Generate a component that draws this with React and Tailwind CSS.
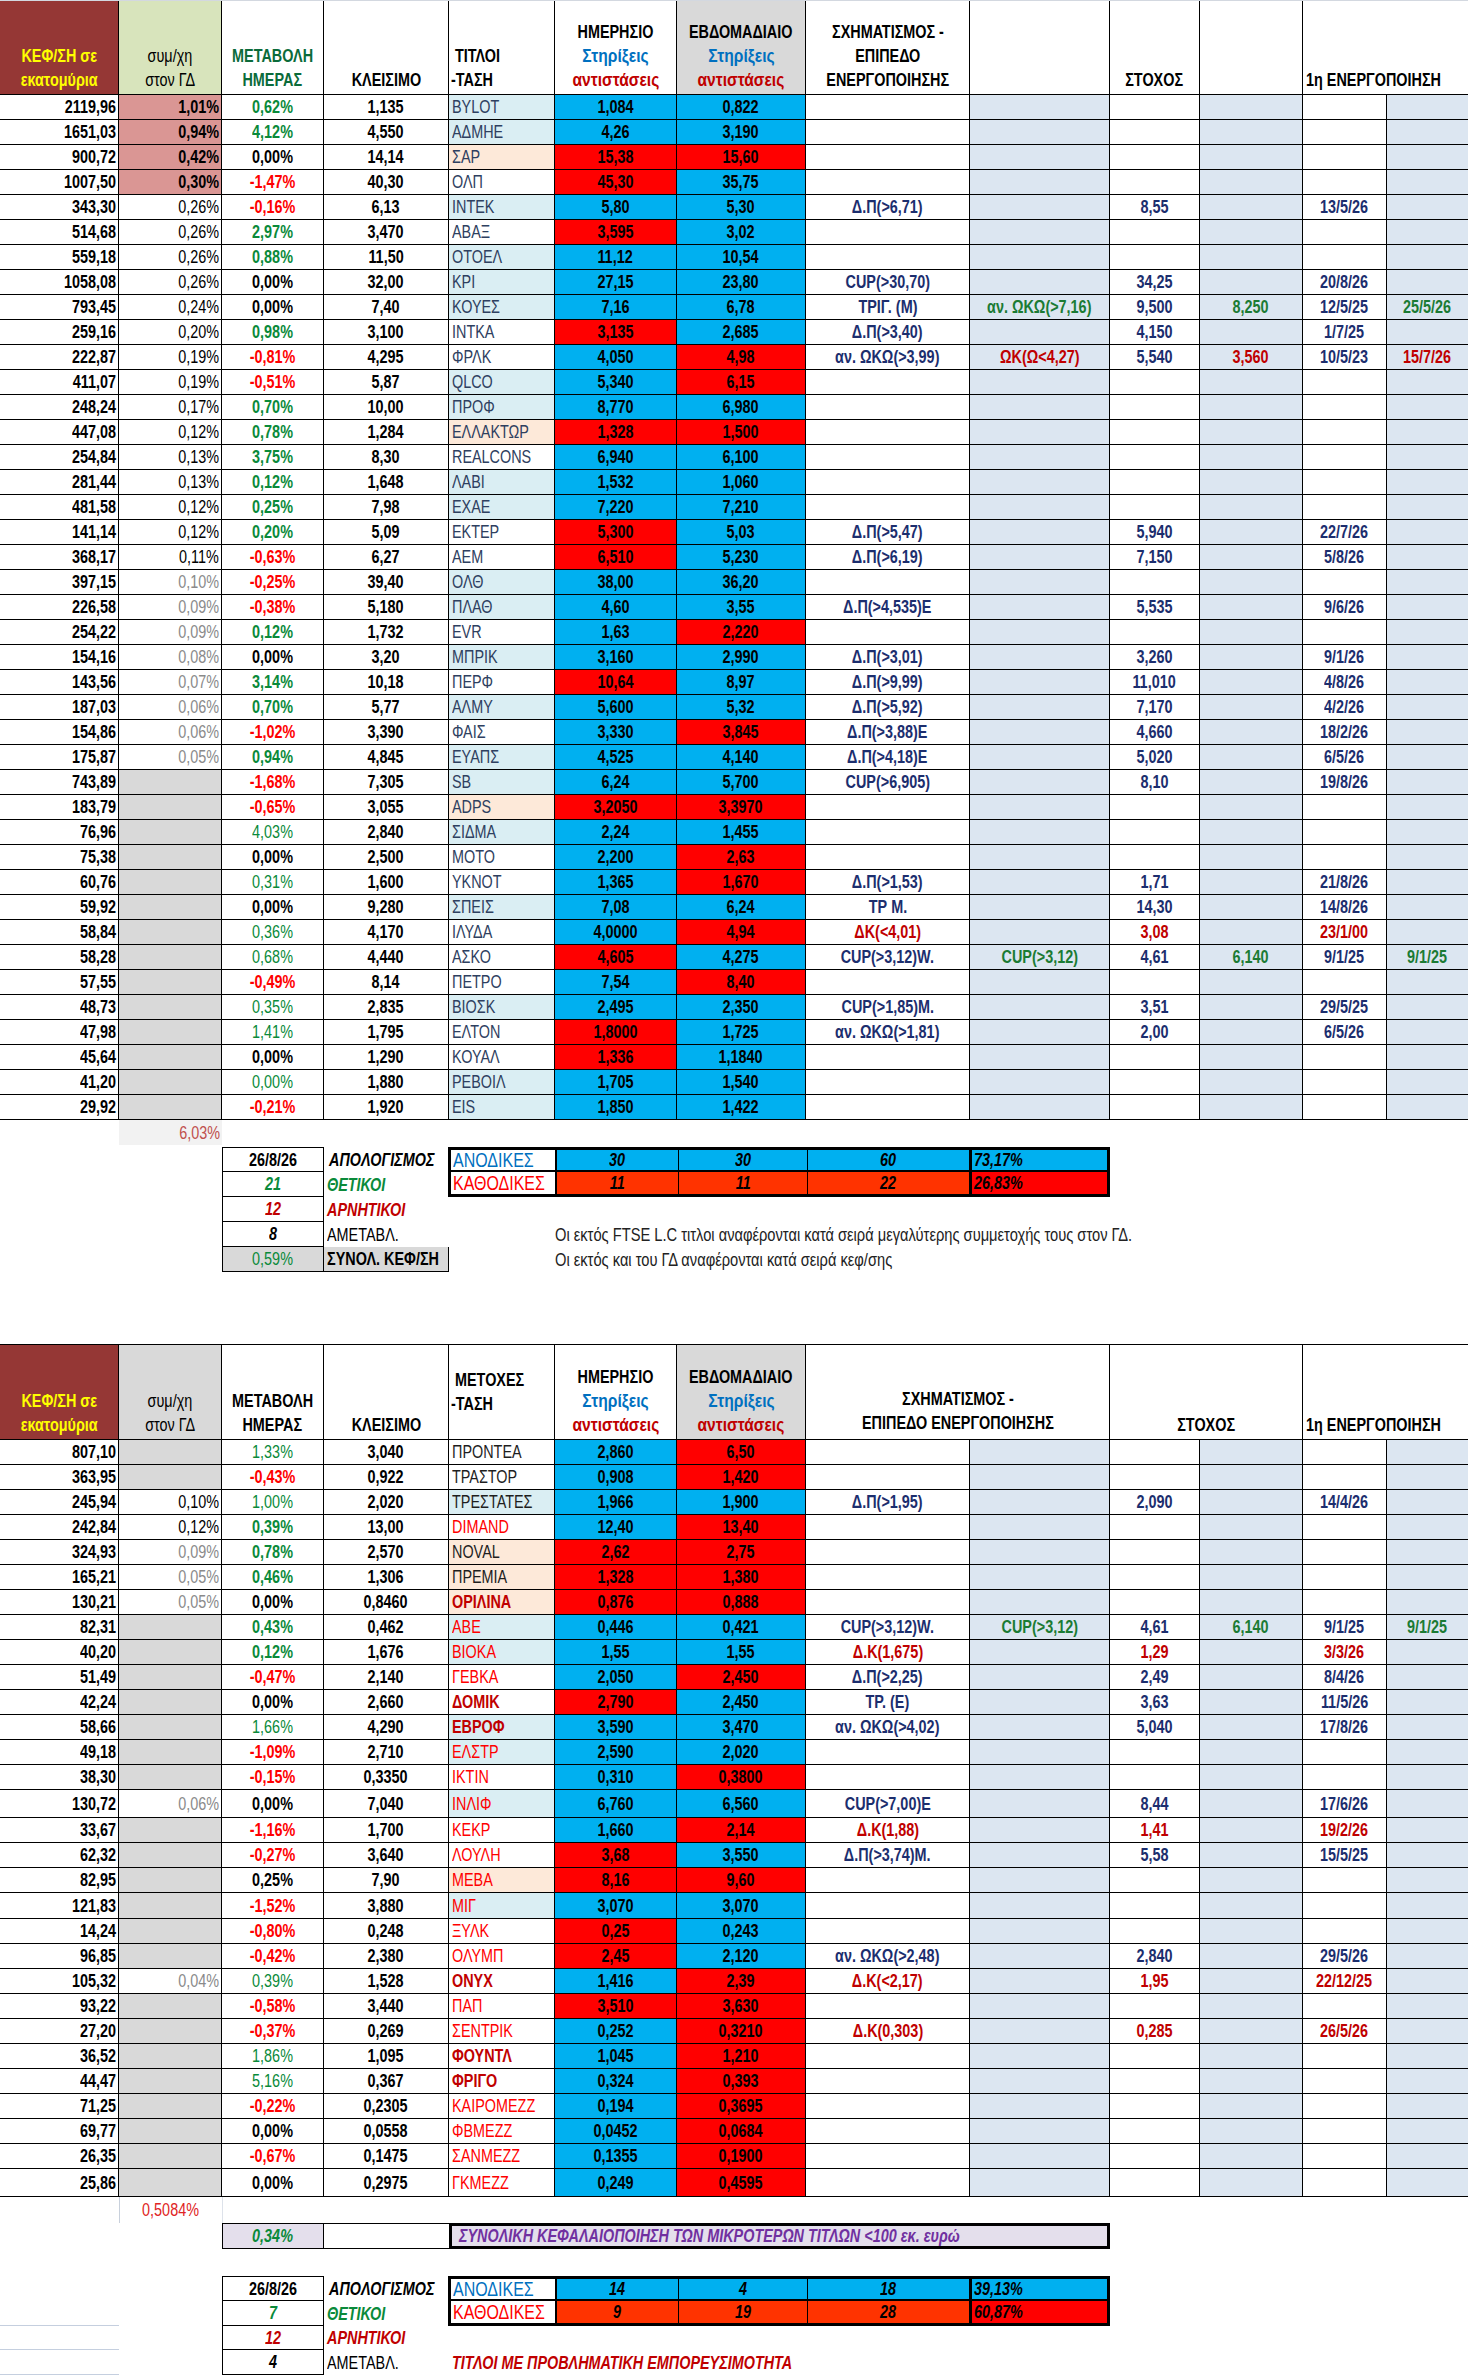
import React from "react";

const COLS =
  "grid grid-cols-[119px_103px_102px_125px_106px_122px_129px_164px_140px_90px_103px_84px_81px]";
const FONT = "font-['Liberation_Sans','Arial',sans-serif]";

const SHARE = {
  p: "bg-[#da9694] font-bold text-black",
  k: "text-black",
  g: "text-[#8a8a8a]",
  x: "bg-[#d9d9d9]",
};
const CHG = {
  r: "text-[#ff0000] font-bold",
  k: "text-black font-bold",
  g: "text-[#0a8a3a] font-bold",
  gl: "text-[#0a8a3a]",
};
const TBG = { l: "bg-[#daeef3]", w: "bg-white", o: "bg-[#fde9d9]" };
const TTX = {
  a: "text-[#2e4060]",
  n: "text-[#1e1e1e]",
  r: "text-[#ff0000]",
  R: "text-[#c00000] font-bold",
};
const DW = { B: "bg-[#00b0f0]", R: "bg-[#ff0000]" };

// [cap, share, shareType, change, close, title, titleBg, day, dayBg, week, weekBg, extra]
const T1 = [
  ["2119,96", "1,01%", "p", "0,62%", "1,135", "BYLOT", "l", "1,084", "B", "0,822", "B"],
  ["1651,03", "0,94%", "p", "4,12%", "4,550", "ΑΔΜΗΕ", "l", "4,26", "B", "3,190", "B"],
  ["900,72", "0,42%", "p", "0,00%", "14,14", "ΣΑΡ", "o", "15,38", "R", "15,60", "R"],
  ["1007,50", "0,30%", "p", "-1,47%", "40,30", "ΟΛΠ", "w", "45,30", "R", "35,75", "B"],
  ["343,30", "0,26%", "k", "-0,16%", "6,13", "ΙΝΤΕΚ", "l", "5,80", "B", "5,30", "B", { m: "Δ.Π(>6,71)|8,55|13/5/26" }],
  ["514,68", "0,26%", "k", "2,97%", "3,470", "ΑΒΑΞ", "w", "3,595", "R", "3,02", "B"],
  ["559,18", "0,26%", "k", "0,88%", "11,50", "ΟΤΟΕΛ", "l", "11,12", "B", "10,54", "B"],
  ["1058,08", "0,26%", "k", "0,00%", "32,00", "ΚΡΙ", "l", "27,15", "B", "23,80", "B", { m: "CUP(>30,70)|34,25|20/8/26" }],
  ["793,45", "0,24%", "k", "0,00%", "7,40", "ΚΟΥΕΣ", "l", "7,16", "B", "6,78", "B", { m: "ΤΡΙΓ. (Μ)|9,500|12/5/25", a: "αν. ΩΚΩ(>7,16)|8,250|25/5/26" }],
  ["259,16", "0,20%", "k", "0,98%", "3,100", "ΙΝΤΚΑ", "w", "3,135", "R", "2,685", "B", { m: "Δ.Π(>3,40)|4,150|1/7/25" }],
  ["222,87", "0,19%", "k", "-0,81%", "4,295", "ΦΡΛΚ", "w", "4,050", "B", "4,98", "R", { m: "αν. ΩΚΩ(>3,99)|5,540|10/5/23", a: "ΩΚ(Ω<4,27)|3,560|15/7/26", at: "r" }],
  ["411,07", "0,19%", "k", "-0,51%", "5,87", "QLCO", "l", "5,340", "B", "6,15", "R"],
  ["248,24", "0,17%", "k", "0,70%", "10,00", "ΠΡΟΦ", "l", "8,770", "B", "6,980", "B"],
  ["447,08", "0,12%", "k", "0,78%", "1,284", "ΕΛΛΑΚΤΩΡ", "o", "1,328", "R", "1,500", "R"],
  ["254,84", "0,13%", "k", "3,75%", "8,30", "REALCONS", "w", "6,940", "B", "6,100", "B"],
  ["281,44", "0,13%", "k", "0,12%", "1,648", "ΛΑΒΙ", "l", "1,532", "B", "1,060", "B"],
  ["481,58", "0,12%", "k", "0,25%", "7,98", "ΕΧΑΕ", "l", "7,220", "B", "7,210", "B"],
  ["141,14", "0,12%", "k", "0,20%", "5,09", "ΕΚΤΕΡ", "w", "5,300", "R", "5,03", "B", { m: "Δ.Π(>5,47)|5,940|22/7/26" }],
  ["368,17", "0,11%", "k", "-0,63%", "6,27", "ΑΕΜ", "w", "6,510", "R", "5,230", "B", { m: "Δ.Π(>6,19)|7,150|5/8/26" }],
  ["397,15", "0,10%", "g", "-0,25%", "39,40", "ΟΛΘ", "l", "38,00", "B", "36,20", "B"],
  ["226,58", "0,09%", "g", "-0,38%", "5,180", "ΠΛΑΘ", "l", "4,60", "B", "3,55", "B", { m: "Δ.Π(>4,535)Ε|5,535|9/6/26" }],
  ["254,22", "0,09%", "g", "0,12%", "1,732", "EVR", "w", "1,63", "B", "2,220", "R"],
  ["154,16", "0,08%", "g", "0,00%", "3,20", "ΜΠΡΙΚ", "l", "3,160", "B", "2,990", "B", { m: "Δ.Π(>3,01)|3,260|9/1/26" }],
  ["143,56", "0,07%", "g", "3,14%", "10,18", "ΠΕΡΦ", "w", "10,64", "R", "8,97", "B", { m: "Δ.Π(>9,99)|11,010|4/8/26" }],
  ["187,03", "0,06%", "g", "0,70%", "5,77", "ΑΛΜΥ", "l", "5,600", "B", "5,32", "B", { m: "Δ.Π(>5,92)|7,170|4/2/26" }],
  ["154,86", "0,06%", "g", "-1,02%", "3,390", "ΦΑΙΣ", "w", "3,330", "B", "3,845", "R", { m: "Δ.Π(>3,88)Ε|4,660|18/2/26" }],
  ["175,87", "0,05%", "g", "0,94%", "4,845", "ΕΥΑΠΣ", "l", "4,525", "B", "4,140", "B", { m: "Δ.Π(>4,18)Ε|5,020|6/5/26" }],
  ["743,89", "", "x", "-1,68%", "7,305", "SB", "l", "6,24", "B", "5,700", "B", { m: "CUP(>6,905)|8,10|19/8/26" }],
  ["183,79", "", "x", "-0,65%", "3,055", "ADPS", "o", "3,2050", "R", "3,3970", "R"],
  ["76,96", "", "x", "4,03%", "2,840", "ΣΙΔΜΑ", "l", "2,24", "B", "1,455", "B", { cc: "gl" }],
  ["75,38", "", "x", "0,00%", "2,500", "ΜΟΤΟ", "w", "2,200", "B", "2,63", "R"],
  ["60,76", "", "x", "0,31%", "1,600", "ΥΚΝΟΤ", "w", "1,365", "B", "1,670", "R", { cc: "gl", m: "Δ.Π(>1,53)|1,71|21/8/26" }],
  ["59,92", "", "x", "0,00%", "9,280", "ΣΠΕΙΣ", "l", "7,08", "B", "6,24", "B", { m: "ΤΡ Μ.|14,30|14/8/26" }],
  ["58,84", "", "x", "0,36%", "4,170", "ΙΛΥΔΑ", "w", "4,0000", "B", "4,94", "R", { cc: "gl", m: "ΔΚ(<4,01)|3,08|23/1/00", mt: "r" }],
  ["58,28", "", "x", "0,68%", "4,440", "ΑΣΚΟ", "w", "4,605", "R", "4,275", "B", { cc: "gl", m: "CUP(>3,12)W.|4,61|9/1/25", a: "CUP(>3,12)|6,140|9/1/25" }],
  ["57,55", "", "x", "-0,49%", "8,14", "ΠΕΤΡΟ", "w", "7,54", "B", "8,40", "R"],
  ["48,73", "", "x", "0,35%", "2,835", "ΒΙΟΣΚ", "l", "2,495", "B", "2,350", "B", { cc: "gl", m: "CUP(>1,85)Μ.|3,51|29/5/25" }],
  ["47,98", "", "x", "1,41%", "1,795", "ΕΛΤΟΝ", "w", "1,8000", "R", "1,725", "B", { cc: "gl", m: "αν. ΩΚΩ(>1,81)|2,00|6/5/26" }],
  ["45,64", "", "x", "0,00%", "1,290", "ΚΟΥΑΛ", "w", "1,336", "R", "1,1840", "B"],
  ["41,20", "", "x", "0,00%", "1,880", "ΡΕΒΟΙΛ", "l", "1,705", "B", "1,540", "B", { cc: "gl" }],
  ["29,92", "", "x", "-0,21%", "1,920", "EIS", "l", "1,850", "B", "1,422", "B"],
];

const T2 = [
  ["807,10", "", "x", "1,33%", "3,040", "ΠΡΟΝΤΕΑ", "w", "2,860", "B", "6,50", "R", { cc: "gl", ts: "n" }],
  ["363,95", "", "x", "-0,43%", "0,922", "ΤΡΑΣΤΟΡ", "w", "0,908", "B", "1,420", "R", { ts: "n" }],
  ["245,94", "0,10%", "k", "1,00%", "2,020", "ΤΡΕΣΤΑΤΕΣ", "l", "1,966", "B", "1,900", "B", { cc: "gl", ts: "n", m: "Δ.Π(>1,95)|2,090|14/4/26" }],
  ["242,84", "0,12%", "k", "0,39%", "13,00", "DIMAND", "w", "12,40", "B", "13,40", "R", { ts: "r" }],
  ["324,93", "0,09%", "g", "0,78%", "2,570", "NOVAL", "o", "2,62", "R", "2,75", "R", { ts: "n" }],
  ["165,21", "0,05%", "g", "0,46%", "1,306", "ΠΡΕΜΙΑ", "o", "1,328", "R", "1,380", "R", { ts: "n" }],
  ["130,21", "0,05%", "g", "0,00%", "0,8460", "ΟΡΙΛΙΝΑ", "o", "0,876", "R", "0,888", "R", { ts: "R" }],
  ["82,31", "", "x", "0,43%", "0,462", "ABE", "l", "0,446", "B", "0,421", "B", { ts: "r", m: "CUP(>3,12)W.|4,61|9/1/25", a: "CUP(>3,12)|6,140|9/1/25" }],
  ["40,20", "", "x", "0,12%", "1,676", "ΒΙΟΚΑ", "l", "1,55", "B", "1,55", "B", { ts: "r", m: "Δ.Κ(1,675)|1,29|3/3/26", mt: "r" }],
  ["51,49", "", "x", "-0,47%", "2,140", "ΓΕΒΚΑ", "w", "2,050", "B", "2,450", "R", { ts: "r", m: "Δ.Π(>2,25)|2,49|8/4/26" }],
  ["42,24", "", "x", "0,00%", "2,660", "ΔΟΜΙΚ", "w", "2,790", "R", "2,450", "B", { ts: "R", m: "ΤΡ. (Ε)|3,63|11/5/26" }],
  ["58,66", "", "x", "1,66%", "4,290", "ΕΒΡΟΦ", "l", "3,590", "B", "3,470", "B", { cc: "gl", ts: "R", m: "αν. ΩΚΩ(>4,02)|5,040|17/8/26" }],
  ["49,18", "", "x", "-1,09%", "2,710", "ΕΛΣΤΡ", "l", "2,590", "B", "2,020", "B", { ts: "r" }],
  ["38,30", "", "x", "-0,15%", "0,3350", "ΙΚΤΙΝ", "w", "0,310", "B", "0,3800", "R", { ts: "r" }],
  ["130,72", "0,06%", "g", "0,00%", "7,040", "ΙΝΛΙΦ", "l", "6,760", "B", "6,560", "B", { ts: "r", h: "h-[28px]", m: "CUP(>7,00)Ε|8,44|17/6/26" }],
  ["33,67", "", "x", "-1,16%", "1,700", "ΚΕΚΡ", "w", "1,660", "B", "2,14", "R", { ts: "r", m: "Δ.Κ(1,88)|1,41|19/2/26", mt: "r" }],
  ["62,32", "", "x", "-0,27%", "3,640", "ΛΟΥΛΗ", "w", "3,68", "R", "3,550", "B", { ts: "r", m: "Δ.Π(>3,74)Μ.|5,58|15/5/25" }],
  ["82,95", "", "x", "0,25%", "7,90", "ΜΕΒΑ", "o", "8,16", "R", "9,60", "R", { ts: "r", cc: "k" }],
  ["121,83", "", "x", "-1,52%", "3,880", "ΜΙΓ", "l", "3,070", "B", "3,070", "B", { ts: "r", h: "h-[26px]" }],
  ["14,24", "", "x", "-0,80%", "0,248", "ΞΥΛΚ", "w", "0,25", "R", "0,243", "B", { ts: "r" }],
  ["96,85", "", "x", "-0,42%", "2,380", "ΟΛΥΜΠ", "w", "2,45", "R", "2,120", "B", { ts: "r", m: "αν. ΩΚΩ(>2,48)|2,840|29/5/26" }],
  ["105,32", "0,04%", "g", "0,39%", "1,528", "ΟΝΥΧ", "w", "1,416", "B", "2,39", "R", { cc: "gl", ts: "R", m: "Δ.Κ(<2,17)|1,95|22/12/25", mt: "r" }],
  ["93,22", "", "x", "-0,58%", "3,440", "ΠΑΠ", "w", "3,510", "R", "3,630", "R", { ts: "r" }],
  ["27,20", "", "x", "-0,37%", "0,269", "ΣΕΝΤΡΙΚ", "w", "0,252", "B", "0,3210", "R", { ts: "r", m: "Δ.Κ(0,303)|0,285|26/5/26", mt: "r" }],
  ["36,52", "", "x", "1,86%", "1,095", "ΦΟΥΝΤΛ", "w", "1,045", "B", "1,210", "R", { cc: "gl", ts: "R" }],
  ["44,47", "", "x", "5,16%", "0,367", "ΦΡΙΓΟ", "w", "0,324", "B", "0,393", "R", { cc: "gl", ts: "R" }],
  ["71,25", "", "x", "-0,22%", "0,2305", "ΚΑΙΡΟΜΕΖΖ", "w", "0,194", "B", "0,3695", "R", { ts: "r" }],
  ["69,77", "", "x", "0,00%", "0,0558", "ΦΒΜΕΖΖ", "w", "0,0452", "B", "0,0684", "R", { ts: "r" }],
  ["26,35", "", "x", "-0,67%", "0,1475", "ΣΑΝΜΕΖΖ", "w", "0,1355", "B", "0,1900", "R", { ts: "r" }],
  ["25,86", "", "x", "0,00%", "0,2975", "ΓΚΜΕΖΖ", "w", "0,249", "B", "0,4595", "R", { ts: "r", h: "h-[28px]" }],
];

// narrow text: Liberation Sans squeezed to the width of a condensed face
function T({ a = "c", sc = "scale-x-[0.8]", className = "", children }) {
  const o = a === "l" ? "origin-left" : a === "r" ? "origin-right" : "origin-center";
  return <span className={`inline-block whitespace-nowrap ${sc} ${o} ${className}`}>{children}</span>;
}

function Cell({ className = "", al = "c", last, children }) {
  const j = al === "l" ? "justify-start" : al === "r" ? "justify-end" : "justify-center";
  return (
    <div
      className={`flex items-center overflow-hidden border-b border-black ${j} ${
        last ? "" : "border-r"
      } ${className}`}
    >
      {children ? <T a={al}>{children}</T> : null}
    </div>
  );
}

function DataRow({ r, second }) {
  const [cap, sh, st, chg, cl, title, tb, d, db, w, wb, x = {}] = r;
  const m = x.m ? x.m.split("|") : ["", "", ""];
  const a = x.a ? x.a.split("|") : ["", "", ""];
  const cc = x.cc || (chg.startsWith("-") ? "r" : chg === "0,00%" ? "k" : "g");
  const mc = x.mt === "r" ? "text-[#c00000]" : "text-[#1c2e6e]";
  const ac = x.at === "r" ? "text-[#c00000]" : "text-[#1b7b34]";
  const ts = x.ts || (second ? "n" : "a");
  return (
    <div className={`${COLS} ${x.h || "h-[25px]"}`}>
      <Cell al="r" className="pr-[2px] font-bold text-black">{cap}</Cell>
      <Cell al="r" className={`pr-[2px] ${SHARE[st]}`}>{sh}</Cell>
      <Cell className={CHG[cc]}>{chg}</Cell>
      <Cell className="font-bold text-black">{cl}</Cell>
      <Cell al="l" className={`pl-[3px] ${TBG[tb]} ${TTX[ts]}`}>{title}</Cell>
      <Cell className={`font-bold text-black ${DW[db]}`}>{d}</Cell>
      <Cell className={`font-bold text-black ${DW[wb]}`}>{w}</Cell>
      <Cell className={`font-bold ${mc}`}>{m[0]}</Cell>
      <Cell className={`font-bold bg-[#dce6f1] ${ac}`}>{a[0]}</Cell>
      <Cell className={`font-bold ${mc}`}>{m[1]}</Cell>
      <Cell className={`font-bold bg-[#dce6f1] ${ac}`}>{a[1]}</Cell>
      <Cell className={`font-bold ${mc}`}>{m[2]}</Cell>
      <Cell last className={`font-bold bg-[#dce6f1] ${ac}`}>{a[2]}</Cell>
    </div>
  );
}

function H({ className = "", last, children }) {
  return (
    <div
      className={`flex flex-col items-center justify-end pb-[2px] text-[18px] leading-[24px] border-b border-black ${
        last ? "" : "border-r"
      } ${className}`}
    >
      {children}
    </div>
  );
}

function L({ a = "c", className = "", children }) {
  return (
    <T a={a} className={className}>
      {children}
    </T>
  );
}

function SR() {
  return (
    <>
      <T sc="scale-x-[0.82]" className="text-[19px] text-[#0070c0]">Στηρίξεις</T>
      <T sc="scale-x-[0.82]" className="text-[19px] text-[#c00000]">αντιστάσεις</T>
    </>
  );
}

function HeadOne() {
  return (
    <div className={`${COLS} h-[95px] border-t border-t-[#d3d8e0]`}>
      <H className="bg-[#953735] text-[#ffff00] font-bold">
        <L>ΚΕΦ/ΣΗ σε</L>
        <L>εκατομύρια</L>
      </H>
      <H className="bg-[#d8e4bc] text-black">
        <L>συμ/χη</L>
        <L>στον ΓΔ</L>
      </H>
      <H className="text-[#0b6b3a] font-bold">
        <L>ΜΕΤΑΒΟΛΗ</L>
        <L>ΗΜΕΡΑΣ</L>
      </H>
      <H className="font-bold text-black">
        <L>ΚΛΕΙΣΙΜΟ</L>
      </H>
      <H className="font-bold text-black !items-start pl-[2px]">
        <L a="l">&nbsp;ΤΙΤΛΟΙ</L>
        <L a="l">-ΤΑΣΗ</L>
      </H>
      <H className="font-bold text-black">
        <L>ΗΜΕΡΗΣΙΟ</L>
        <SR />
      </H>
      <H className="bg-[#d9d9d9] font-bold text-black">
        <L>ΕΒΔΟΜΑΔΙΑΙΟ</L>
        <SR />
      </H>
      <H className="font-bold text-black">
        <L>ΣΧΗΜΑΤΙΣΜΟΣ -</L>
        <L>ΕΠΙΠΕΔΟ</L>
        <L>ΕΝΕΡΓΟΠΟΙΗΣΗΣ</L>
      </H>
      <H />
      <H className="font-bold text-black">
        <L>ΣΤΟΧΟΣ</L>
      </H>
      <H />
      <H last className="col-span-2 !items-start pl-[3px] font-bold text-black">
        <L a="l">1η ΕΝΕΡΓΟΠΟΙΗΣΗ</L>
      </H>
    </div>
  );
}

function HeadTwo() {
  return (
    <div className={`${COLS} h-[96px] border-t border-black`}>
      <H className="bg-[#953735] text-[#ffff00] font-bold">
        <L>ΚΕΦ/ΣΗ σε</L>
        <L>εκατομύρια</L>
      </H>
      <H className="bg-[#d9d9d9] text-black">
        <L>συμ/χη</L>
        <L>στον ΓΔ</L>
      </H>
      <H className="font-bold text-black">
        <L>ΜΕΤΑΒΟΛΗ</L>
        <L>ΗΜΕΡΑΣ</L>
      </H>
      <H className="font-bold text-black">
        <L>ΚΛΕΙΣΙΜΟ</L>
      </H>
      <H className="font-bold text-black !items-start !justify-center pl-[2px] !pb-0">
        <L a="l">&nbsp;ΜΕΤΟΧΕΣ</L>
        <L a="l">-ΤΑΣΗ</L>
      </H>
      <H className="font-bold text-black">
        <L>ΗΜΕΡΗΣΙΟ</L>
        <SR />
      </H>
      <H className="bg-[#d9d9d9] font-bold text-black">
        <L>ΕΒΔΟΜΑΔΙΑΙΟ</L>
        <SR />
      </H>
      <H className="col-span-2 font-bold text-black !pb-[4px]">
        <L>ΣΧΗΜΑΤΙΣΜΟΣ -</L>
        <L>ΕΠΙΠΕΔΟ ΕΝΕΡΓΟΠΟΙΗΣΗΣ</L>
      </H>
      <H className="col-span-2 font-bold text-black">
        <L>ΣΤΟΧΟΣ</L>
      </H>
      <H last className="col-span-2 !items-start pl-[3px] font-bold text-black">
        <L a="l">1η ΕΝΕΡΓΟΠΟΙΗΣΗ</L>
      </H>
    </div>
  );
}

function Tally({ up, down }) {
  return (
    <div className="col-start-5 col-span-5 row-start-1 row-span-2 -ml-px grid grid-cols-[106px_122px_129px_164px_1fr] grid-rows-2 border-[3px] border-black">
      <div className="flex items-center border-r-2 border-b-2 border-black bg-white pl-[2px] text-[20px] text-[#0070c0]">
        <T a="l">ΑΝΟΔΙΚΕΣ</T>
      </div>
      {up.slice(0, 3).map((v, i) => (
        <div
          key={i}
          className={`flex items-center justify-center border-b-2 border-black bg-[#00b0f0] font-bold italic text-black ${
            i === 2 ? "border-r-[3px]" : "border-r"
          }`}
        >
          <T>{v}</T>
        </div>
      ))}
      <div className="flex items-center border-b-2 border-black bg-[#00b0f0] pl-[2px] font-bold italic text-black">
        <T a="l">{up[3]}</T>
      </div>
      <div className="flex items-center border-r-2 border-black bg-white pl-[2px] text-[20px] text-[#ff0000]">
        <T a="l">ΚΑΘΟΔΙΚΕΣ</T>
      </div>
      {down.slice(0, 3).map((v, i) => (
        <div
          key={i}
          className={`flex items-center justify-center border-black bg-[#ff3300] font-bold italic text-black ${
            i === 2 ? "border-r-[3px]" : "border-r"
          }`}
        >
          <T>{v}</T>
        </div>
      ))}
      <div className="flex items-center bg-[#ff0000] pl-[2px] font-bold italic text-black">
        <T a="l">{down[3]}</T>
      </div>
    </div>
  );
}

function Counts({ pos, neg, flat }) {
  return (
    <>
      <div className="col-start-3 row-start-1 flex items-center justify-center border border-black font-bold text-black">
        <T>26/8/26</T>
      </div>
      <div className="col-start-4 row-start-1 flex items-center pl-[5px] font-bold italic text-black">
        <T a="l">ΑΠΟΛΟΓΙΣΜΟΣ</T>
      </div>
      <div className="col-start-3 row-start-2 flex items-center justify-center border-x border-b border-black font-bold italic text-[#0a8a3a]">
        <T>{pos}</T>
      </div>
      <div className="col-start-4 row-start-2 flex items-center pl-[3px] font-bold italic text-[#0a8a3a]">
        <T a="l">ΘΕΤΙΚΟΙ</T>
      </div>
      <div className="col-start-3 row-start-3 flex items-center justify-center border-x border-b border-black font-bold italic text-[#c00000]">
        <T>{neg}</T>
      </div>
      <div className="col-start-4 row-start-3 flex items-center pl-[3px] font-bold italic text-[#c00000]">
        <T a="l">ΑΡΝΗΤΙΚΟΙ</T>
      </div>
      <div className="col-start-3 row-start-4 flex items-center justify-center border-x border-b border-black font-bold italic text-black">
        <T>{flat}</T>
      </div>
      <div className="col-start-4 row-start-4 flex items-center pl-[3px] text-black">
        <T a="l">ΑΜΕΤΑΒΛ.</T>
      </div>
    </>
  );
}

function SummaryOne() {
  return (
    <div>
      <div className={`${COLS} h-[25px]`}>
        <div />
        <div className="flex items-center justify-end bg-[#f2f2f2] pr-[2px] text-[#c0504d]">
          <T a="r">6,03%</T>
        </div>
      </div>
      <div className="h-[2px]" />
      <div className={`${COLS} grid-rows-[25px_25px_25px_25px_25px]`}>
        <Counts pos="21" neg="12" flat="8" />
        <Tally up={["30", "30", "60", "73,17%"]} down={["11", "11", "22", "26,83%"]} />
        <div className="col-start-6 col-span-8 row-start-4 flex items-center text-[#222]">
          <T a="l" sc="scale-x-[0.815]">
            Οι εκτός FTSE L.C τιτλοι αναφέρονται κατά σειρά μεγαλύτερης συμμετοχής τους στον ΓΔ.
          </T>
        </div>
        <div className="col-start-3 row-start-5 flex items-center justify-center border-x border-b border-black bg-[#d9d9d9] text-[#0a8a3a]">
          <T>0,59%</T>
        </div>
        <div className="col-start-4 row-start-5 flex items-center border-r border-b border-black bg-[#d9d9d9] pl-[3px] font-bold text-black">
          <T a="l">ΣΥΝΟΛ. ΚΕΦ/ΣΗ</T>
        </div>
        <div className="col-start-6 col-span-8 row-start-5 flex items-center text-[#222]">
          <T a="l" sc="scale-x-[0.815]">
            Οι εκτός και του ΓΔ αναφέρονται κατά σειρά κεφ/σης
          </T>
        </div>
      </div>
    </div>
  );
}

function SummaryTwo() {
  return (
    <div>
      <div className={`${COLS} h-[26px]`}>
        <div />
        <div className="flex items-center justify-center border-l border-[#c8d0dc] text-[#e02424]">
          <T>0,5084%</T>
        </div>
        <div className="border-l border-[#dde2ea]" />
      </div>
      <div className={`${COLS} h-[26px]`}>
        <div className="col-start-3 flex items-center justify-center border border-black bg-[#e4dfec] font-bold italic text-[#0a8a3a]">
          <T>0,34%</T>
        </div>
        <div className="border-y border-black bg-white" />
        <div className="col-span-5 flex items-center border-[3px] border-black bg-[#e4dfec] pl-[7px] font-bold italic text-[#7030a0]">
          <T a="l">ΣΥΝΟΛΙΚΗ ΚΕΦΑΛΑΙΟΠΟΙΗΣΗ ΤΩΝ ΜΙΚΡΟΤΕΡΩΝ ΤΙΤΛΩΝ &lt;100 εκ. ευρώ</T>
        </div>
      </div>
      <div className="h-[27px]" />
      <div className={`${COLS} grid-rows-[25px_25px_24px_25px]`}>
        <div className="col-start-1 row-start-2 border-b border-[#c5cfdf]" />
        <div className="col-start-1 row-start-3 border-b border-[#c5cfdf]" />
        <div className="col-start-1 row-start-4 border-b border-[#c5cfdf]" />
        <Counts pos="7" neg="12" flat="4" />
        <Tally up={["14", "4", "18", "39,13%"]} down={["9", "19", "28", "60,87%"]} />
        <div className="col-start-5 col-span-9 row-start-4 flex items-center pl-[3px] font-bold italic text-[#c00000]">
          <T a="l">ΤΙΤΛΟΙ ΜΕ ΠΡΟΒΛΗΜΑΤΙΚΗ ΕΜΠΟΡΕΥΣΙΜΟΤΗΤΑ</T>
        </div>
      </div>
    </div>
  );
}

export default function App() {
  return (
    <div className={`w-[1468px] bg-white text-[18px] leading-none ${FONT}`}>
      <HeadOne />
      {T1.map((r, i) => (
        <DataRow key={i} r={r} />
      ))}
      <SummaryOne />
      <div className="h-[72px]" />
      <HeadTwo />
      {T2.map((r, i) => (
        <DataRow key={i} r={r} second />
      ))}
      <SummaryTwo />
    </div>
  );
}
